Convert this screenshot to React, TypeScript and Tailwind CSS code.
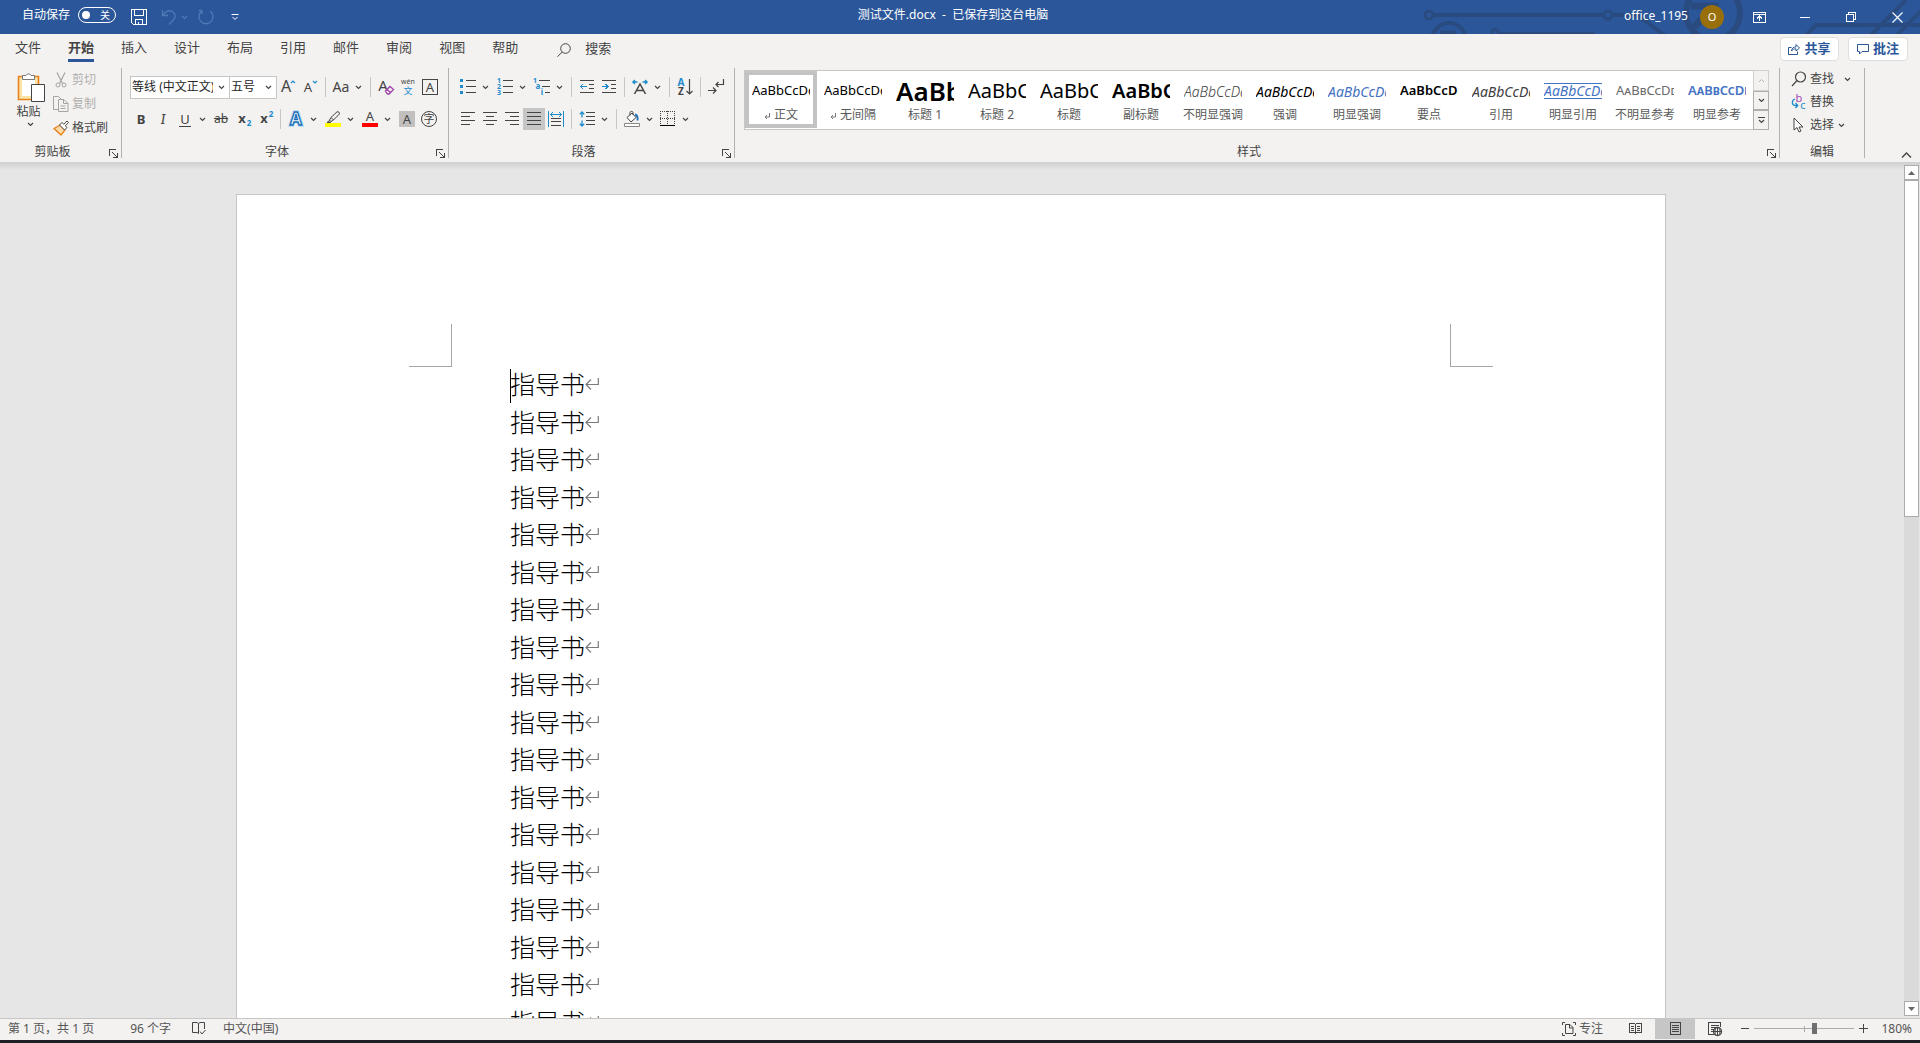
import React, { useState } from "react";

const BLUE = "#1e8bcd";
const INK = "#444444";

type IconProps = {
  size?: number;
  w?: number;
  h?: number;
  crisp?: boolean;
  stroke?: string;
  className?: string;
  children: React.ReactNode;
};

function Icon({ size = 16, w, h, crisp, stroke = INK, className = "", children }: IconProps) {
  const width = w ?? size;
  const height = h ?? size;
  return (
    <svg
      aria-hidden="true"
      width={width}
      height={height}
      viewBox={`0 0 ${width} ${height}`}
      fill="none"
      stroke={stroke}
      shapeRendering={crisp ? "crispEdges" : undefined}
      className={`shrink-0 overflow-visible ${className}`}
    >
      {children}
    </svg>
  );
}

function Glyph({ x, y, size, fill = INK, bold, children }: { x: number; y: number; size: number; fill?: string; bold?: boolean; children: string }) {
  return (
    <text x={x} y={y} fontSize={size} fill={fill} stroke="none" textAnchor="middle" fontWeight={bold ? 700 : 400}>
      {children}
    </text>
  );
}

const Chevron = ({ color = INK }: { color?: string }) => (
  <Icon w={7} h={5} stroke={color}>
    <path d="M1 1l2.5 2.5L6 1" strokeWidth="1.2" />
  </Icon>
);

function Tool({ label, active, children }: { label: string; active?: boolean; children: React.ReactNode }) {
  return (
    <button
      type="button"
      aria-label={label}
      aria-pressed={active}
      className={`flex h-[22px] w-[22px] items-center justify-center ${active ? "bg-[#c6c6c6]" : "hover:bg-[#dadada]"}`}
    >
      {children}
    </button>
  );
}

function SplitTool({ label, children }: { label: string; children: React.ReactNode }) {
  return (
    <div className="flex w-9 items-center">
      <Tool label={label}>{children}</Tool>
      <button type="button" aria-label={`${label}选项`} className="flex h-[22px] w-3 items-center justify-center hover:bg-[#dadada]">
        <Chevron />
      </button>
    </div>
  );
}

const Separator = () => <div className="mx-1 h-5 w-px bg-[#c8c6c4]" />;

function Group({ title, launcher = true, className = "", children }: { title: string; launcher?: boolean; className?: string; children: React.ReactNode }) {
  return (
    <section aria-label={title} className={`flex flex-col border-r border-[#b3b1af] ${className}`}>
      <div className="flex-1">{children}</div>
      <div className="flex h-3.5 items-start">
        <div className="flex-1 text-center text-xs leading-4">{title}</div>
        {launcher && (
          <button type="button" aria-label={`${title}设置`} className="flex h-3.5 w-4 items-end pl-1">
            <Icon size={9} crisp>
              <path d="M.5 7V.5H7M3 3l5 5M8.5 4v4.5H4" />
            </Icon>
          </button>
        )}
      </div>
    </section>
  );
}

/* ---------- title bar ---------- */

function Circuit() {
  return (
    <div aria-hidden="true" className="absolute inset-y-0 right-0 overflow-hidden">
      <svg width="500" height="34" viewBox="-10 0 500 34" fill="none" stroke="#2a4b80" strokeWidth="4">
        <circle cx="-1" cy="15" r="4" strokeWidth="3" />
        <path d="M4 15H173M183 15h24l30 22" />
        <circle cx="178" cy="15" r="4" strokeWidth="3" />
        <circle cx="19" cy="40" r="17" />
        <path d="M10 33h16" strokeWidth="5" />
        <circle cx="65" cy="33" r="3.500" strokeWidth="3" />
        <path d="M70 34h95" />
        <circle cx="283" cy="13" r="27" strokeWidth="6" />
        <path d="M261 6h24v20M285 6l-22 22" strokeWidth="7" />
        <path d="M375 36l11-11h104M440 36l36-36M466 36l30-30" />
      </svg>
    </div>
  );
}

function TitleBar() {
  const [saved, setSaved] = useState(false);
  return (
    <header className="relative flex h-[34px] shrink-0 bg-[#2b579a] text-xs text-white">
      <Circuit />
      <div className="flex flex-1 items-center pb-1 pl-[22px]">
        <label className="flex items-center gap-2">
          <span>自动保存</span>
          <input type="checkbox" className="sr-only" checked={saved} onChange={() => setSaved(!saved)} />
          <span className="flex h-4 w-[38px] items-center justify-between rounded-full border border-white pl-[3px] pr-[5px] text-[10px]">
            <span className="h-2 w-2 rounded-full bg-white" />
            <span className="leading-3">关</span>
          </span>
        </label>
        <div className="flex items-center pl-[15px] pt-1">
          <button type="button" aria-label="保存">
            <Icon stroke="#fff" crisp>
              <path d="M.5.5h15v15H2.500l-2-2zM3.500.5v6h9v-6M4.500 15.500v-5h7v5M7.500 13v2" />
            </Icon>
          </button>
          <button type="button" aria-label="撤消" className="ml-3.5 flex items-center gap-1">
            <Icon stroke="#5078b5">
              <path d="M1.500 1v5.500H7M1.500 6.500C5 2 9 .8 12 3c3.500 3 2 6.500 0 8.500L8 15.500" strokeWidth="1.300" />
            </Icon>
            <Chevron color="#5078b5" />
          </button>
          <button type="button" aria-label="恢复" className="ml-2.5">
            <Icon stroke="#5078b5">
              <path d="M4 1.500H.8M4 1.500v3.500M4 2A7 7 0 1 0 12 2" strokeWidth="1.300" />
            </Icon>
          </button>
          <button type="button" aria-label="自定义快速访问工具栏" className="ml-[17px]">
            <Icon w={8} h={7} stroke="#fff">
              <path d="M.5.500h7M1.500 3L4 5.500 6.500 3" />
            </Icon>
          </button>
        </div>
      </div>
      <h1 className="self-center whitespace-pre pb-1 pr-9">测试文件.docx  -  已保存到这台电脑</h1>
      <div className="relative flex flex-1 items-center justify-end">
        <button type="button" className="flex items-center gap-3 pr-3">
          <span className="pb-0.5">office_1195</span>
          <span className="flex h-6 w-6 items-center justify-center rounded-full bg-[#986f0b] text-[11px]">O</span>
        </button>
        <button type="button" aria-label="功能区显示选项" className="flex h-8 w-[46px] items-center justify-center">
          <Icon w={13} h={11} stroke="#fff" crisp>
            <path d="M.5.500h12v10H.500zM.500 2.500h12M6.500 9V4M4 6.500L6.500 4 9 6.500" />
          </Icon>
        </button>
        <button type="button" aria-label="最小化" className="flex h-8 w-[46px] items-center justify-center">
          <span className="h-px w-2.5 bg-white" />
        </button>
        <button type="button" aria-label="还原" className="flex h-8 w-[46px] items-center justify-center">
          <Icon size={10} stroke="#fff" crisp>
            <path d="M.5 2.500h7v7h-7zM2.500 2.500v-2h7v7h-2" />
          </Icon>
        </button>
        <button type="button" aria-label="关闭" className="flex h-8 w-[46px] items-center justify-center">
          <Icon size={11} stroke="#fff">
            <path d="M.5.500l10 10M10.500.500l-10 10" strokeWidth="1.100" />
          </Icon>
        </button>
      </div>
    </header>
  );
}

/* ---------- tabs ---------- */

const TABS = ["文件", "开始", "插入", "设计", "布局", "引用", "邮件", "审阅", "视图", "帮助"];

function TabRow() {
  const [tab, setTab] = useState("开始");
  return (
    <div className="flex h-[34px] shrink-0 items-start pr-3 text-[13px]">
      <div role="tablist" className="flex gap-[27px] pl-[15px]">
        {TABS.map((t) => (
          <button
            key={t}
            type="button"
            role="tab"
            aria-selected={t === tab}
            onClick={() => setTab(t)}
            className={`h-7 border-b-3 leading-5 ${t === tab ? "border-[#2b579a] font-bold" : "border-transparent"}`}
          >
            {t}
          </button>
        ))}
      </div>
      <label className="flex items-center gap-3.5 pl-[39px] pt-1">
        <Icon size={14} className="mt-1">
          <circle cx="8.500" cy="5.500" r="4.800" />
          <path d="M5.200 9L.5 13.700" />
        </Icon>
        <input type="text" placeholder="搜索" aria-label="搜索" className="w-32 bg-transparent leading-5 outline-none placeholder:text-[#444444]" />
      </label>
      <div className="flex flex-1 justify-end gap-[9px] pt-[3px] font-bold text-[#2b579a]">
        <button type="button" className="flex h-6 w-[59px] items-center justify-center gap-1 rounded-sm border border-[#e1dfdd] bg-white">
          <Icon size={12} stroke="#2b579a">
            <path d="M3.500 4.500h-3v7h9V8.500M3.500 8c.3-3 2-4 4.500-4V1.500L11.500 5 8 8V5.800C6 5.800 4.500 6.500 3.500 8z" />
          </Icon>
          共享
        </button>
        <button type="button" className="flex h-6 w-[60px] items-center justify-center gap-1 rounded-sm border border-[#e1dfdd] bg-white">
          <Icon size={12} stroke="#2b579a">
            <path d="M.5 1.500h11v7H5l-2.500 2.500V8.500h-2z" />
          </Icon>
          批注
        </button>
      </div>
    </div>
  );
}

/* ---------- ribbon groups ---------- */

function ClipboardGroup() {
  return (
    <Group title="剪贴板">
      <div className="flex pr-[13px]">
        <button type="button" className="flex w-[53px] flex-col items-center pl-2 pt-1 text-xs">
          <Icon w={28} h={30}>
            <path d="M1.500 4.500h20v23h-20z" fill="#fbe3a6" stroke="#e8821e" strokeWidth="1.600" />
            <path d="M5 8h13v16H5z" fill="#fff" stroke="none" />
            <path d="M5.500 7.500V3.500h3.500a2.700 2.700 0 0 1 5 0h3.500v4z" fill="#fff" stroke="#777" />
            <path d="M14.500 12.500h13v17h-13z" fill="#fff" stroke="#444" />
          </Icon>
          <span className="mr-1 leading-5">粘贴</span>
          <Chevron />
        </button>
        <div className="flex flex-col text-xs">
          <button type="button" disabled className="flex h-6 items-center text-[#b1afad]">
            <Icon stroke="#a6a4a2" className="mr-[3px]">
              <path d="M4 .5l5.500 11M12 .5l-5.500 11" strokeWidth="1.200" />
              <circle cx="5" cy="13" r="2" />
              <circle cx="11" cy="13" r="2" />
            </Icon>
            剪切
          </button>
          <button type="button" disabled className="flex h-6 items-center text-[#b1afad]">
            <Icon stroke="#a6a4a2" className="mr-[3px]">
              <path d="M5 13.500H.500V.500h5L8 3M5.500 3.500h5.500l4 4v8H5.500zM10.500 3.500v4H15M7.500 10h5M7.500 12.500h5" />
            </Icon>
            复制
          </button>
          <button type="button" className="flex h-6 items-center">
            <Icon className="mr-[3px]">
              <path d="M1 8.500l6-3.500 5 5-4 5z" fill="#fbd9a8" stroke="#e8821e" strokeWidth="1.300" />
              <path d="M3 10l4 4" stroke="#e8821e" />
              <path d="M6.500 5L9 2.500l1.800 1.800L14 1l1.500 1.500-3.300 3.300L14 7.500 11.500 10z" fill="#fff" />
            </Icon>
            格式刷
          </button>
        </div>
      </div>
    </Group>
  );
}

function Combo({ label, value, className }: { label: string; value: string; className: string }) {
  return (
    <div className={`flex h-[23px] items-center border border-[#c6c6c6] bg-white ${className}`}>
      <select aria-label={label} className="h-5 min-w-0 flex-1 appearance-none overflow-hidden bg-transparent pl-px text-xs text-[#262626] outline-none">
        <option>{value}</option>
      </select>
      <span className="pointer-events-none flex w-4 shrink-0 justify-center">
        <Chevron />
      </span>
    </div>
  );
}

function FontGroup() {
  return (
    <Group title="字体">
      <div className="flex flex-col gap-[10px] pl-2 pr-[7px] pt-2">
        <div className="flex h-[22px] items-center">
          <Combo label="字体" value="等线 (中文正文)" className="w-[100px]" />
          <Combo label="字号" value="五号" className="-ml-px w-12" />
          <Tool label="增大字号">
            <Icon>
              <Glyph x={6} y={13} size={16}>A</Glyph>
              <path d="M11 4l2-2 2 2" stroke={BLUE} strokeWidth="1.200" />
            </Icon>
          </Tool>
          <Tool label="减小字号">
            <Icon>
              <Glyph x={6} y={13} size={13}>A</Glyph>
              <path d="M11 2l2 2 2-2" stroke={BLUE} strokeWidth="1.200" />
            </Icon>
          </Tool>
          <Separator />
          <SplitTool label="更改大小写">
            <span className="text-[14px] leading-5">Aa</span>
          </SplitTool>
          <Separator />
          <Tool label="清除所有格式">
            <Icon>
              <Glyph x={5} y={12} size={15}>A</Glyph>
              <path d="M7.500 12l4.500-4.500 3.500 3L11 15H9.500z" fill="#f3f2f1" stroke="#9b3fa9" strokeWidth="1.300" />
              <path d="M9 10.500l3.500 3" stroke="#9b3fa9" strokeWidth="1.300" />
            </Icon>
          </Tool>
          <Tool label="拼音指南">
            <Icon>
              <Glyph x={8} y={5} size={7}>wén</Glyph>
              <Glyph x={8} y={15} size={9} fill={BLUE}>文</Glyph>
            </Icon>
          </Tool>
          <Tool label="字符边框">
            <Icon crisp>
              <path d="M.5.500h15v15H.500z" />
              <Glyph x={8} y={13} size={13}>A</Glyph>
            </Icon>
          </Tool>
        </div>
        <div className="flex h-[22px] items-center">
          <Tool label="加粗"><span className="text-[13px] font-bold leading-5">B</span></Tool>
          <Tool label="倾斜"><span className="font-serif text-[15px] italic leading-5">I</span></Tool>
          <SplitTool label="下划线">
            <span className="border-b border-[#444444] px-px text-[13px] leading-3.5">U</span>
          </SplitTool>
          <Tool label="删除线"><span className="text-xs leading-5 line-through">ab</span></Tool>
          <Tool label="下标">
            <Icon>
              <Glyph x={7} y={12} size={13} bold>x</Glyph>
              <Glyph x={14} y={15} size={8} fill={BLUE} bold>2</Glyph>
            </Icon>
          </Tool>
          <Tool label="上标">
            <Icon>
              <Glyph x={7} y={12} size={13} bold>x</Glyph>
              <Glyph x={14} y={6} size={8} fill={BLUE} bold>2</Glyph>
            </Icon>
          </Tool>
          <Separator />
          <div className="flex gap-px pr-px">
            <SplitTool label="文本效果">
              <Icon>
                <text x="8" y="14" fontSize="17" fontWeight="700" textAnchor="middle" fill="#fff" stroke="#a9d3f0" strokeWidth="3">A</text>
                <text x="8" y="14" fontSize="17" fontWeight="700" textAnchor="middle" fill="#fff" stroke="#1b6fb8" strokeWidth="1.300">A</text>
              </Icon>
            </SplitTool>
            <SplitTool label="突出显示">
              <Icon>
                <path d="M0 12h16v4H0z" fill="#ffff00" stroke="none" />
                <path d="M6 6.500L12 .8c1.500-.5 3 1 2.300 2.300L8.500 9zM6 6.500L4.500 9 6 10.500 8.500 9M4.500 9.500L2 11.500h3.500z" />
              </Icon>
            </SplitTool>
            <SplitTool label="字体颜色">
              <Icon>
                <path d="M0 12h16v4H0z" fill="#ff0000" stroke="none" />
                <Glyph x={8} y={10} size={13}>A</Glyph>
              </Icon>
            </SplitTool>
          </div>
          <Tool label="字符底纹"><span className="h-4 w-4 bg-[#c1c0be] text-[13px] leading-4">A</span></Tool>
          <Tool label="带圈字符">
            <Icon>
              <circle cx="8" cy="8" r="7.500" />
              <Glyph x={8} y={12} size={11}>字</Glyph>
            </Icon>
          </Tool>
        </div>
      </div>
    </Group>
  );
}

const ALIGN = [
  { label: "左对齐", d: "M1 1.500h14M1 5.500h9M1 9.500h14M1 13.500h9" },
  { label: "居中", d: "M1 1.500h14M4 5.500h8M1 9.500h14M4 13.500h8" },
  { label: "右对齐", d: "M1 1.500h14M6 5.500h9M1 9.500h14M6 13.500h9" },
  { label: "两端对齐", d: "M1 1.500h14M1 5.500h14M1 9.500h14M1 13.500h14", active: true },
];

function ParagraphGroup() {
  return (
    <Group title="段落">
      <div className="flex flex-col gap-[10px] pl-2 pr-[7px] pt-2">
        <div className="flex h-[22px] items-center">
          <div className="flex gap-px">
            <SplitTool label="项目符号">
              <Icon crisp>
                <path d="M0 0h3v3H0zM0 6h3v3H0zM0 12h3v3H0z" fill={BLUE} stroke="none" />
                <path d="M6 1.500h10M6 7.500h10M6 13.500h10" />
              </Icon>
            </SplitTool>
            <SplitTool label="编号">
              <Icon crisp>
                <Glyph x={2} y={4} size={7} fill={BLUE} bold>1</Glyph>
                <Glyph x={2} y={10} size={7} fill={BLUE} bold>2</Glyph>
                <Glyph x={2} y={16} size={7} fill={BLUE} bold>3</Glyph>
                <path d="M6 1.500h10M6 7.500h10M6 13.500h10" />
              </Icon>
            </SplitTool>
            <SplitTool label="多级列表">
              <Icon crisp>
                <Glyph x={1} y={4} size={7} fill={BLUE} bold>1</Glyph>
                <Glyph x={4} y={10} size={8} fill={BLUE} bold>a</Glyph>
                <Glyph x={8} y={16} size={8} fill={BLUE} bold>i</Glyph>
                <path d="M5 1.500h11M8 7.500h8M11 13.500h5" />
              </Icon>
            </SplitTool>
          </div>
          <Separator />
          <Tool label="减少缩进量">
            <Icon crisp>
              <path d="M1 1.500h14M10 5.500h5M10 9.500h5M1 13.500h14" />
              <path d="M2 7.500h6M4 5L1.500 7.500 4 10" stroke={BLUE} strokeWidth="1.400" />
            </Icon>
          </Tool>
          <Tool label="增加缩进量">
            <Icon crisp>
              <path d="M1 1.500h14M10 5.500h5M10 9.500h5M1 13.500h14" />
              <path d="M1 7.500h6M4.500 5L7 7.500 4.500 10" stroke={BLUE} strokeWidth="1.400" />
            </Icon>
          </Tool>
          <Separator />
          <SplitTool label="中文版式">
            <Icon>
              <path d="M2.500 15L8 5l5.500 10M4.500 11.500h7" strokeWidth="1.500" />
              <path d="M.8 3h4.700M3 1L.8 3 3 5M15.200 3h-4.700M13 1l2.200 2L13 5" stroke={BLUE} strokeWidth="1.300" />
            </Icon>
          </SplitTool>
          <Separator />
          <Tool label="排序">
            <Icon>
              <Glyph x={4} y={7} size={10} fill={BLUE} bold>A</Glyph>
              <Glyph x={4} y={16} size={10} bold>Z</Glyph>
              <path d="M12.500 0v15M9.500 12l3 3 3-3" strokeWidth="1.200" />
            </Icon>
          </Tool>
          <Separator />
          <Tool label="显示编辑标记">
            <Icon>
              <path d="M15.500 0v5.500H8M10.500 3L8 5.500 10.500 8M0 11.500h8M5 8.500l3 3-3 3" strokeWidth="1.200" />
            </Icon>
          </Tool>
        </div>
        <div className="flex h-[22px] items-center">
          {ALIGN.map((a) => (
            <Tool key={a.label} label={a.label} active={a.active}>
              <Icon crisp>
                <path d={a.d} />
              </Icon>
            </Tool>
          ))}
          <Tool label="分散对齐">
            <Icon crisp>
              <path d="M.5 0v16M15.500 0v16M3 3.500h10M5 1L2.500 3.500 5 6M11 1l2.500 2.500L11 6" stroke={BLUE} />
              <path d="M3 7.500h10M3 10.500h10M3 14.500h10" />
            </Icon>
          </Tool>
          <Separator />
          <SplitTool label="行和段落间距">
            <Icon>
              <path d="M7 1.500h9M7 5.500h9M7 9.500h9M7 13.500h9" shapeRendering="crispEdges" />
              <path d="M3 1v5.500M.8 3.200L3 1l2.200 2.200M3 15V9.500M.8 12.800L3 15l2.200-2.200" stroke={BLUE} strokeWidth="1.300" />
            </Icon>
          </SplitTool>
          <Separator />
          <SplitTool label="底纹">
            <Icon>
              <path d="M.5 12.500h15v3H.500z" fill="#fff" stroke="#8a8886" />
              <path d="M3 6.500L8 2l4 4.500-5 4.500zM6 4.500V1.500c0-1.500 3-1.500 3 0V4" fill="#fff" />
              <path d="M11 3.500c2 .3 3 2 2.500 6" stroke="#1b6fb8" strokeWidth="1.800" />
            </Icon>
          </SplitTool>
          <SplitTool label="边框">
            <Icon crisp>
              <path d="M0 .5h15M.5 0v14M14.500 0v14M7.500 0v14M0 7.500h15" strokeDasharray="1 1" />
              <path d="M0 14.500h15" stroke="#000" strokeWidth="1" />
            </Icon>
          </SplitTool>
        </div>
      </div>
    </Group>
  );
}

const STYLES = [
  { name: "正文", mark: true, cls: "text-[13px] text-black" },
  { name: "无间隔", mark: true, cls: "text-[13px] text-black" },
  { name: "标题 1", cls: "text-[26px] font-semibold text-black" },
  { name: "标题 2", cls: "text-[20px] text-black" },
  { name: "标题", cls: "text-[20px] text-black" },
  { name: "副标题", cls: "text-[20px] font-semibold text-black" },
  { name: "不明显强调", cls: "text-[14px] font-light italic text-[#404040]" },
  { name: "强调", cls: "text-[14px] italic text-black" },
  { name: "明显强调", cls: "text-[14px] italic text-[#4472c4]" },
  { name: "要点", cls: "text-[13px] font-semibold text-black" },
  { name: "引用", cls: "text-[14px] italic text-[#404040]" },
  { name: "明显引用", cls: "border-y border-[#4472c4] text-[14px] leading-3.5 italic text-[#4472c4]" },
  { name: "不明显参考", cls: "text-[13px] text-[#6a6a6a] [font-variant-caps:small-caps]" },
  { name: "明显参考", cls: "text-[13px] font-semibold text-[#4472c4] [font-variant-caps:small-caps]" },
];

function StylesGroup() {
  return (
    <Group title="样式" className="min-w-0 flex-1">
      <div className="pl-[9px] pr-2.5 pt-0.5">
        <div className="flex h-[60px] bg-white">
          <div className="flex min-w-0 flex-1 overflow-hidden border border-r-0 border-[#c8c6c4]">
            {STYLES.map((s, i) => (
              <button
                key={s.name}
                type="button"
                className={`flex h-[57px] w-[72px] shrink-0 flex-col items-center border-4 ${i === 0 ? "border-[#c3c3c3]" : "border-transparent"}`}
              >
                <span className="flex h-8 w-[58px] shrink-0 items-center overflow-hidden">
                  <span className={`shrink-0 ${s.cls}`}>AaBbCcDd</span>
                </span>
                <span className="flex items-center gap-1 whitespace-nowrap text-xs leading-4 text-[#5a5a5a]">
                  {s.mark && (
                    <Icon w={6} h={7} stroke="#777" className="mt-0.5">
                      <path d="M5.500 0v4H1M3 2L1 4l2 2" />
                    </Icon>
                  )}
                  {s.name}
                </span>
              </button>
            ))}
          </div>
          <div className="flex w-4 flex-col">
            <button type="button" aria-label="上一行" disabled className="flex h-[21px] items-center justify-center border border-[#d2d0ce] bg-[#f3f2f1]">
              <Icon w={7} h={5} stroke="#b5b3b1">
                <path d="M1 4l2.500-2.500L6 4" />
              </Icon>
            </button>
            <button type="button" aria-label="下一行" className="flex h-[19px] items-center justify-center border border-[#b0aeac] bg-[#f3f2f1]">
              <Chevron />
            </button>
            <button type="button" aria-label="更多样式" className="flex h-5 items-center justify-center border border-[#b0aeac] bg-[#f3f2f1]">
              <Icon w={7} h={7}>
                <path d="M0 .500h7M1 3l2.500 2.500L6 3" strokeWidth="1.200" />
              </Icon>
            </button>
          </div>
        </div>
      </div>
    </Group>
  );
}

function EditingGroup() {
  return (
    <Group title="编辑" launcher={false} className="w-[85px]">
      <div className="flex flex-col pl-[11px] text-xs">
        <button type="button" className="flex h-[22px] items-center">
          <Icon className="mr-[3px]">
            <circle cx="9.500" cy="6" r="5" strokeWidth="1.200" />
            <path d="M6 9.500L1 15" strokeWidth="1.200" />
          </Icon>
          <span className="mr-2.5">查找</span>
          <Chevron />
        </button>
        <button type="button" className="flex h-6 items-center">
          <Icon className="mr-[3px]">
            <Glyph x={8} y={8} size={11} fill="#a244b0">b</Glyph>
            <Glyph x={12} y={15} size={11} fill={BLUE}>c</Glyph>
            <path d="M4 5C.500 6 .5 11 4 11.500h2.500M4.500 9l2.300 2.500L4.500 14" stroke={BLUE} strokeWidth="1.300" />
          </Icon>
          替换
        </button>
        <button type="button" className="flex h-[22px] items-center">
          <Icon className="mr-[3px]">
            <path d="M3 1v12l3-2.500L8 15l2-1-2-4h4z" fill="#fff" />
          </Icon>
          <span className="mr-1">选择</span>
          <Chevron />
        </button>
      </div>
    </Group>
  );
}

/* ---------- document ---------- */

const LINES = Array.from({ length: 32 }, () => "指导书");

function DocumentArea() {
  return (
    <main className="flex min-h-0 flex-1 bg-[#e6e6e6] bg-linear-to-b from-[#cfcfcf] to-[#e6e6e6] to-[8px]">
      <div className="min-w-0 flex-1 overflow-hidden pr-0.5 pt-8">
        <article className="mx-auto w-[1430px] max-w-full border border-[#c6c6c6] bg-white">
          <div className="flex justify-between px-[172px] pt-[129px]">
            <div className="h-[43px] w-[43px] border-b border-r border-[#a6a6a6]" />
            <div className="h-[43px] w-[43px] border-b border-l border-[#a6a6a6]" />
          </div>
          <div className="-mt-px pl-[273px] text-[25px] leading-normal font-light text-black">
            {LINES.map((line, i) => (
              <p key={i} className="relative flex items-center">
                {i === 0 && <span className="absolute left-0 top-[3px] h-[34px] w-px bg-black" />}
                {line}
                <Icon w={14} h={13} stroke="#7a7a7a">
                  <path d="M13.300 0v6.500H1M6 1.500l-5 5 5 5" strokeWidth="1.200" />
                </Icon>
              </p>
            ))}
          </div>
        </article>
      </div>
      <div className="flex w-4 shrink-0 flex-col pb-0.5 pr-px pt-[3px]">
        <button type="button" aria-label="向上滚动" className="flex h-[15px] shrink-0 items-center justify-center border border-[#ababab] bg-white">
          <Icon w={7} h={4} stroke="none"><path d="M0 4l3.500-4L7 4z" fill="#666" /></Icon>
        </button>
        <div className="min-h-0 flex-1 bg-[#dadada]">
          <div className="h-[41%] border border-[#ababab] bg-white" />
        </div>
        <button type="button" aria-label="向下滚动" className="flex h-[15px] shrink-0 items-center justify-center border border-[#ababab] bg-white">
          <Icon w={7} h={4} stroke="none"><path d="M0 0l3.500 4L7 0z" fill="#666" /></Icon>
        </button>
      </div>
    </main>
  );
}

/* ---------- status bar ---------- */

function StatusBar() {
  const [zoom, setZoom] = useState(180);
  return (
    <footer className="flex h-[22px] shrink-0 items-center border-t border-[#c6c6c6] bg-[#f3f2f1] px-2 pb-0.5 text-xs text-[#555555]">
      <span className="whitespace-pre">第 1 页，共 1 页</span>
      <span className="ml-9">96 个字</span>
      <button type="button" aria-label="校对" className="ml-[21px]">
        <Icon w={14} h={13}>
          <path d="M6.500 11.500L5 10.500H.5V.500H5l1.500 1L8 .500h4.500V7M6.500 1.500v10M8 9.500l2 2.500 3.500-4" />
        </Icon>
      </button>
      <button type="button" className="ml-[17px]">中文(中国)</button>
      <div className="flex flex-1 items-center justify-end">
        <button type="button" className="mr-3 flex items-center gap-[3px]">
          <Icon size={14}>
            <path d="M3 .5H.500V3M11 .500h2.500V3M.500 11v2.500H3M13.500 11v2.500H11M3.500 2.500h4.500l3 3v6H3.500zM7.500 2.500v3.500h3.500" />
          </Icon>
          专注
        </button>
        <button type="button" aria-label="阅读视图" className="flex h-[21px] w-10 items-center justify-center">
          <Icon w={13} h={13} crisp>
            <path d="M.5 1.500h5l1 1 1-1h5v9h-5l-1 1-1-1h-5zM6.500 2v10M2 4.500h3M2 6.500h3M2 8.500h3M8 4.500h3M8 6.500h3M8 8.500h3" />
          </Icon>
        </button>
        <button type="button" aria-label="页面视图" aria-pressed="true" className="flex h-[21px] w-10 items-center justify-center bg-[#c6c6c6]">
          <Icon w={11} h={13} crisp>
            <path d="M.5.500h10v12H.500zM2 3.500h7M2 5.500h7M2 7.500h7M2 9.500h7" />
          </Icon>
        </button>
        <button type="button" aria-label="Web 版式视图" className="flex h-[21px] w-10 items-center justify-center">
          <Icon w={14} h={14}>
            <path d="M6 12.500H.500V.500h12V5M2.500 3.500h8M2.500 5.500h5M2.500 7.500h3M2.500 9.500h2" shapeRendering="crispEdges" />
            <circle cx="9.500" cy="9.500" r="4" strokeWidth="1.300" fill="#f3f2f1" />
            <path d="M5.500 9.500h8M9.500 5.500v8M7.800 6c-1 2-1 5 0 7M11.200 6c1 2 1 5 0 7" />
          </Icon>
        </button>
        <button type="button" aria-label="缩小" className="ml-1.5 flex h-5 w-2 items-center">
          <span className="h-px w-2 bg-[#444444]" />
        </button>
        <div className="relative mx-[5px] flex h-5 w-[100px] items-center">
          <span className="absolute left-1/2 h-1.5 w-px bg-[#ababab]" />
          <input
            type="range"
            aria-label="显示比例"
            min={10}
            max={290}
            value={zoom}
            onChange={(e) => setZoom(Number(e.target.value))}
            className="relative h-px w-full appearance-none bg-[#ababab] outline-none [&::-webkit-slider-thumb]:h-[11px] [&::-webkit-slider-thumb]:w-[5px] [&::-webkit-slider-thumb]:appearance-none [&::-webkit-slider-thumb]:bg-[#6e6e6e]"
          />
        </div>
        <button type="button" aria-label="放大" className="flex h-5 w-[9px] items-center">
          <Icon size={9} crisp>
            <path d="M0 4.500h9M4.500 0v9" />
          </Icon>
        </button>
        <span className="w-11 text-right">{zoom}%</span>
      </div>
    </footer>
  );
}

export default function App() {
  return (
    <div className="flex h-screen min-w-[1280px] flex-col overflow-hidden bg-[#f3f2f1] font-['Noto_Sans','Noto_Sans_CJK_SC',sans-serif] text-[#444444]">
      <TitleBar />
      <TabRow />
      <div className="flex h-[94px] shrink-0 pb-1">
        <ClipboardGroup />
        <FontGroup />
        <ParagraphGroup />
        <StylesGroup />
        <EditingGroup />
        <div className="flex w-[55px] items-end justify-end pr-2">
          <button type="button" aria-label="折叠功能区">
            <Icon w={11} h={6}>
              <path d="M1 5.500l4.500-4.500L10 5.500" strokeWidth="1.400" />
            </Icon>
          </button>
        </div>
      </div>
      <DocumentArea />
      <StatusBar />
      <div className="h-[3px] shrink-0 bg-[#1f1f23]" />
    </div>
  );
}
